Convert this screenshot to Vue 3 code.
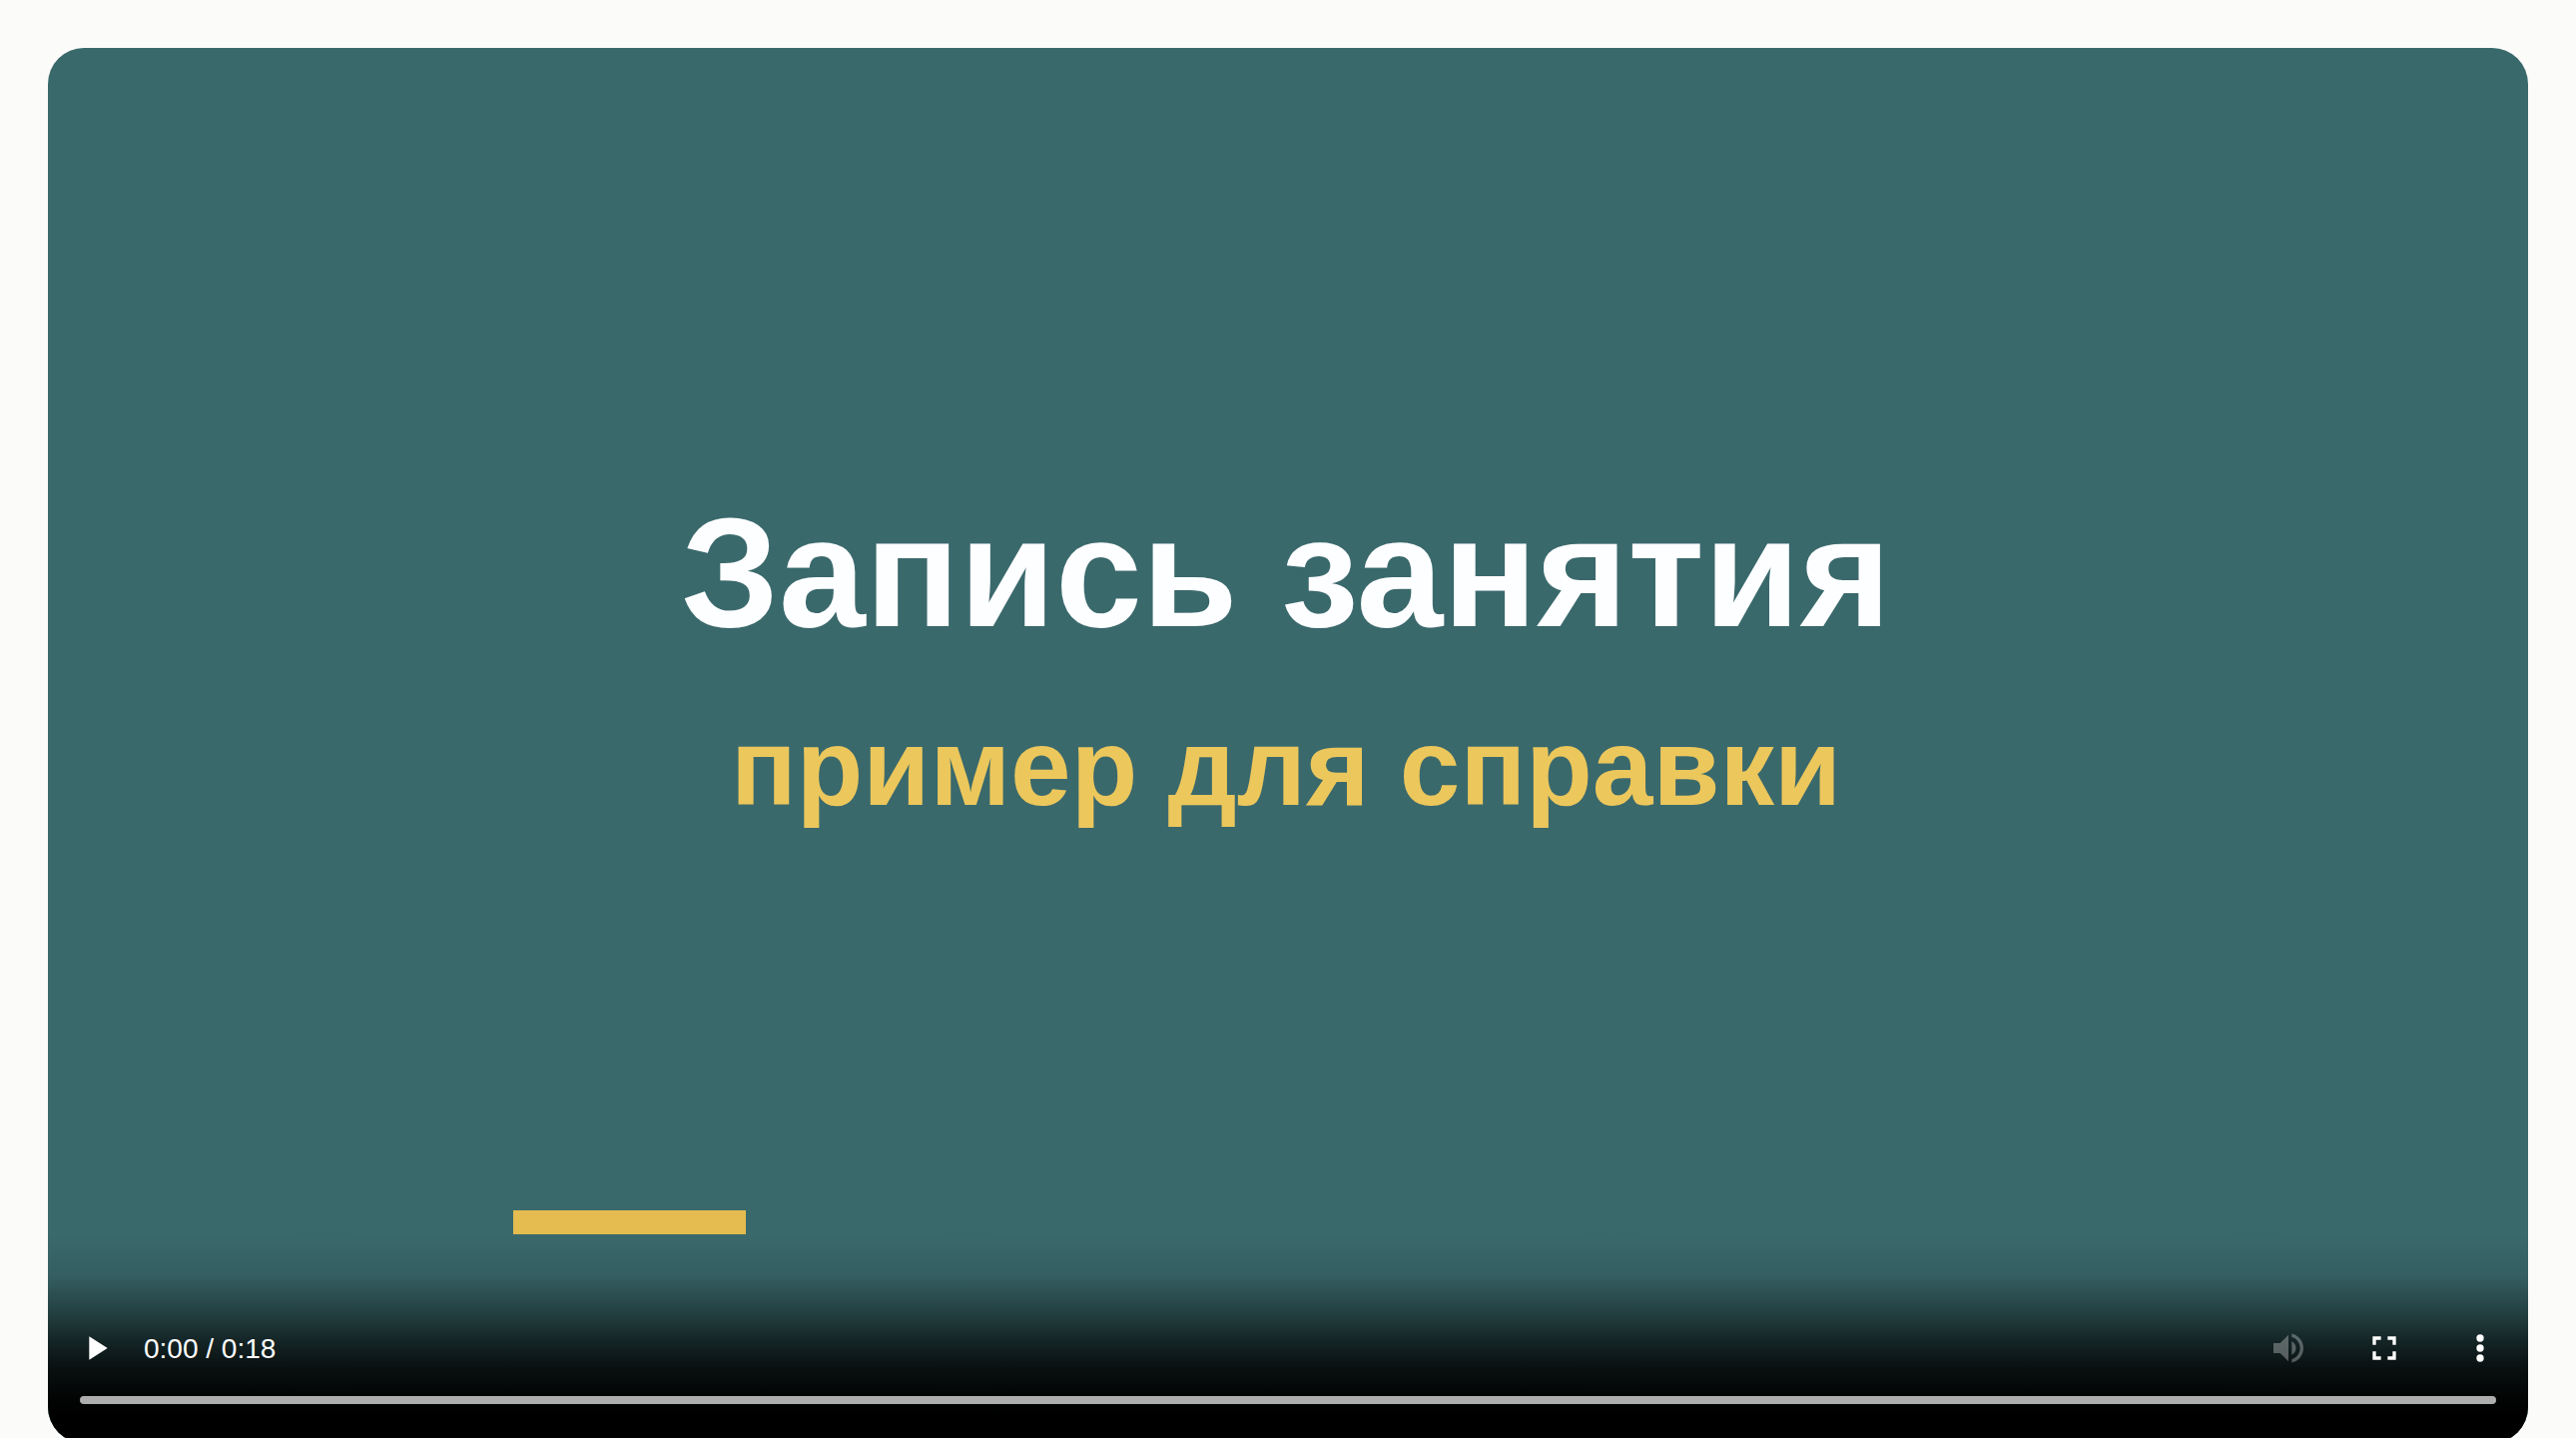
<template>
  <main class="page">
    <section class="player" aria-label="Видео">
      <div class="frame">
        <h1 class="title">Запись занятия</h1>
        <p class="subtitle">пример для справки</p>
        <div class="accent"></div>
      </div>

      <div class="controls">
        <div class="controls-row">
          <button type="button" class="btn" aria-label="Воспроизвести" @click="playing = !playing">
            <svg viewBox="0 0 24 24">
              <path v-if="playing" d="M6 19h4V5H6v14zm8-14v14h4V5h-4z" />
              <path v-else d="M8 5v14l11-7z" />
            </svg>
          </button>
          <span class="time">{{ formatTime(current) }} / {{ formatTime(duration) }}</span>

          <button type="button" class="btn btn-right" aria-label="Звук" disabled>
            <svg viewBox="0 0 24 24">
              <path
                d="M3 9v6h4l5 5V4L7 9H3zm13.5 3c0-1.77-1.02-3.29-2.5-4.03v8.05c1.48-.73 2.5-2.25 2.5-4.02zM14 3.23v2.06c2.89.86 5 3.54 5 6.71s-2.11 5.85-5 6.71v2.06c4.01-.91 7-4.49 7-8.77s-2.99-7.86-7-8.77z"
              />
            </svg>
          </button>
          <button type="button" class="btn" aria-label="Полный экран">
            <svg viewBox="0 0 24 24">
              <path
                d="M7 14H5v5h5v-2H7v-3zm-2-4h2V7h3V5H5v5zm12 7h-3v2h5v-5h-2v3zM14 5v2h3v3h2V5h-5z"
              />
            </svg>
          </button>
          <button type="button" class="btn" aria-label="Ещё">
            <svg viewBox="0 0 24 24">
              <circle cx="12" cy="6" r="2.2" />
              <circle cx="12" cy="12" r="2.2" />
              <circle cx="12" cy="18" r="2.2" />
            </svg>
          </button>
        </div>

        <input
          v-model.number="current"
          class="timeline"
          type="range"
          min="0"
          :max="duration"
          aria-label="Позиция воспроизведения"
        />
      </div>
    </section>
  </main>
</template>

<script setup>
import { ref } from 'vue'

const playing = ref(false)
const current = ref(0)
const duration = 18

const formatTime = (seconds) => {
  const rest = String(seconds % 60).padStart(2, '0')
  return `${Math.floor(seconds / 60)}:${rest}`
}
</script>

<style>
body {
  background: #fbfbf9;
  overflow: hidden;
}
</style>

<style scoped>
.page {
  padding: 48px;
  font-family: 'Liberation Sans', Arial, sans-serif;
}

.player {
  position: relative;
  aspect-ratio: 16 / 9;
  border-radius: 36px;
  overflow: hidden;
  background: #3a696c;
}

.frame {
  padding-top: 17.5%;
  text-align: center;
}

.title {
  margin: 0;
  padding-right: 4px;
  font-size: 156px;
  line-height: 180px;
  font-weight: bold;
  color: #fdfeff;
}

.subtitle {
  margin: 43px 0 0;
  padding-right: 4px;
  font-size: 109px;
  line-height: 124px;
  font-weight: bold;
  color: #ecc75c;
}

.accent {
  width: 9.375%;
  height: 24px;
  margin: 382px 0 0 18.75%;
  background: #e4bc50;
}

.controls {
  position: absolute;
  left: 0;
  right: 0;
  bottom: 0;
  padding: 67px 0 39px;
  background: linear-gradient(
    to bottom,
    rgba(0, 0, 0, 0) 0%,
    rgba(0, 0, 0, 0.1) 20%,
    rgba(0, 0, 0, 0.26) 30%,
    rgba(0, 0, 0, 0.43) 40%,
    rgba(0, 0, 0, 0.68) 53%,
    rgba(0, 0, 0, 0.86) 65%,
    rgba(0, 0, 0, 0.97) 79%,
    #000 88%
  );
}

.controls-row {
  display: flex;
  align-items: center;
}

.btn {
  display: flex;
  align-items: center;
  justify-content: center;
  width: 96px;
  height: 96px;
  padding: 0;
  border: none;
  background: none;
  cursor: pointer;
}

.btn svg {
  width: 40px;
  height: 40px;
  fill: #fff;
}

.btn:disabled {
  opacity: 0.3;
  cursor: default;
}

.btn-right {
  margin-left: auto;
}

.time {
  padding-top: 2px;
  font-size: 28px;
  line-height: 32px;
  color: #fff;
}

.timeline {
  display: block;
  appearance: none;
  width: calc(100% - 64px);
  height: 8px;
  margin: 0 32px;
  border-radius: 4px;
  background: #aeaeae;
  cursor: pointer;
}

.timeline::-webkit-slider-thumb {
  appearance: none;
  width: 8px;
  height: 8px;
  border-radius: 4px;
  background: transparent;
}
</style>
